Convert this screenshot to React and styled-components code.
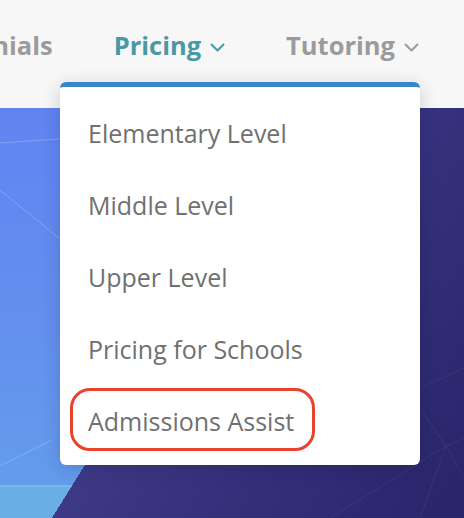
import React from 'react';
import styled, { createGlobalStyle } from 'styled-components';

const GlobalStyle = createGlobalStyle`
  html, body {
    margin: 0;
    padding: 0;
    background: #f7f7f7;
  }
  body {
    font-family: 'Open Sans', 'Noto Sans', sans-serif;
  }
`;

const Page = styled.div`
  position: relative;
  width: 464px;
  height: 518px;
  overflow: hidden;
`;

const Nav = styled.nav`
  height: 108px;
  display: flex;
  justify-content: flex-end;
  align-items: flex-start;
  gap: 61px;
  padding: 28px 45px 0 0;
  box-sizing: border-box;
  background: #f7f7f7;
  overflow: hidden;
`;

const NavItem = styled.div`
  display: flex;
  align-items: center;
  gap: 9px;
  flex-shrink: 0;
  white-space: nowrap;
  font-size: 25.5px;
  font-weight: 700;
  line-height: normal;
  color: ${(p) => (p.$active ? '#4a99a2' : '#9b9b9b')};
`;

const Chevron = styled.svg`
  width: 15px;
  height: 9px;
  margin-top: 4px;
`;

const Hero = styled.section`
  position: relative;
  height: 410px;
  background:
    linear-gradient(121.9deg, transparent 42.7%, #3d3986 42.7%, #322e78 70%, #29256b 100%),
    linear-gradient(180deg, transparent 92%, #6aaee6 92%),
    linear-gradient(180deg, #6183f2 0%, #6390ee 55%, #649cec 92%);
`;

const Facets = styled.svg`
  position: absolute;
  inset: 0;
  width: 100%;
  height: 100%;
`;

const Dropdown = styled.ul`
  position: absolute;
  top: 82px;
  left: 60px;
  width: 360px;
  margin: 0;
  padding: 10px 0 8px;
  box-sizing: border-box;
  list-style: none;
  background: #fff;
  border-top: 5px solid #3a86c9;
  border-radius: 6px;
  box-shadow: 0 4px 18px rgba(20, 20, 60, 0.18);
`;

const Item = styled.li`
  position: relative;
  height: 72px;
  display: flex;
  align-items: center;
  padding-left: 28px;
  font-size: 25px;
  line-height: normal;
  color: #707070;
  white-space: nowrap;

  ${(p) =>
    p.$marked &&
    `
    &::after {
      content: '';
      position: absolute;
      left: 10px;
      top: 3px;
      width: 245px;
      height: 63px;
      box-sizing: border-box;
      border: 3px solid #e8432b;
      border-radius: 20px;
    }
  `}
`;

const ChevronIcon = () => (
  <Chevron viewBox="0 0 15 9" fill="none">
    <path d="M1.5 1.5 L7.5 7.5 L13.5 1.5" stroke="currentColor" strokeWidth="2" strokeLinecap="round" strokeLinejoin="round" />
  </Chevron>
);

const items = [
  'Elementary Level',
  'Middle Level',
  'Upper Level',
  'Pricing for Schools',
  'Admissions Assist',
];

export default function App() {
  return (
    <>
      <GlobalStyle />
      <Page>
        <Nav>
          <NavItem>Testimonials</NavItem>
          <NavItem $active>
            Pricing <ChevronIcon />
          </NavItem>
          <NavItem>
            Tutoring <ChevronIcon />
          </NavItem>
        </Nav>
        <Hero>
          <Facets viewBox="0 0 464 410" preserveAspectRatio="none">
            <g stroke="rgba(255,255,255,0.22)" strokeWidth="1" fill="none">
              <path d="M0 35 L60 31" />
              <path d="M0 82 L60 131" />
              <path d="M0 358 L52 332" />
              <path d="M0 378 L70 378" />
            </g>
            <g stroke="rgba(255,255,255,0.06)" strokeWidth="1" fill="none">
              <path d="M420 280 L464 260" />
              <path d="M420 300 L446 338 L464 330" />
              <path d="M446 338 L464 370" />
              <path d="M446 338 L420 410" />
              <path d="M330 410 L446 338" />
            </g>
          </Facets>
        </Hero>
        <Dropdown>
          {items.map((label) => (
            <Item key={label} $marked={label === 'Admissions Assist'}>
              {label}
            </Item>
          ))}
        </Dropdown>
      </Page>
    </>
  );
}
